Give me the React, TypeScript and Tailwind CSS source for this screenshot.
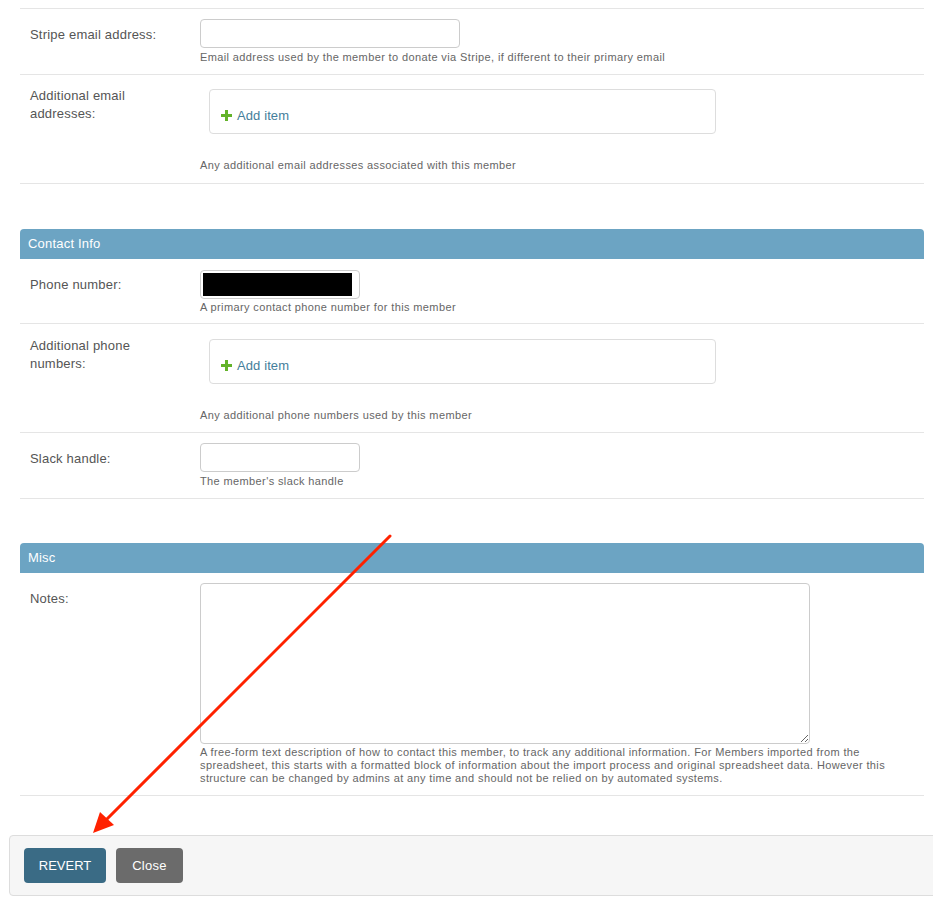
import React from "react";

const font = { fontFamily: '"Liberation Sans", Arial, sans-serif' };

const Help: React.FC<{ children: React.ReactNode; className?: string }> = ({ children, className }) => (
  <div className={`text-[11px] leading-[13px] tracking-[0.38px] text-[#666] ${className ?? ""}`}>{children}</div>
);

const AddItem: React.FC = () => (
  <div className="ml-[9px] w-[507px] h-[45px] border border-[#ddd] rounded-[4px] flex items-start pt-[18px] pl-[11px]">
    <svg width="11" height="11" viewBox="0 0 11 11" className="mr-[5px] mt-[2px]">
      <path d="M4 0h3v4h4v3H7v4H4V7H0V4h4z" fill="#63b32a" />
    </svg>
    <span className="text-[13px] leading-[16px] tracking-[0.1px] text-[#447e9b]">Add item</span>
  </div>
);

const SectionHeader: React.FC<{ title: string }> = ({ title }) => (
  <div className="h-[30px] bg-[#6ca4c3] rounded-t-[4px] flex items-center pl-[8px] text-[13px] tracking-[0.2px] text-white">
    {title}
  </div>
);

const labelCls = "w-[180px] pl-[10px] text-[13px] leading-[18px] tracking-[0.2px] text-[#555]";

export default function App() {
  return (
    <div className="relative w-[933px] h-[914px] overflow-hidden bg-white" style={font}>
      <div className="ml-[20px] w-[904px]">
        <div className="h-[9px] border-b border-[#e5e5e5]" />

        {/* Stripe email */}
        <div className="flex border-b border-[#e5e5e5] pt-[10px] h-[66px]">
          <div className={`${labelCls} pt-[7px]`}>Stripe email address:</div>
          <div>
            <div className="w-[260px] h-[29px] border border-[#ccc] rounded-[4px]" />
            <Help className="mt-[3px]">Email address used by the member to donate via Stripe, if different to their primary email</Help>
          </div>
        </div>

        {/* Additional emails */}
        <div className="flex border-b border-[#e5e5e5] pt-[14px] h-[109px]">
          <div className={`${labelCls} pr-[20px] -mt-[2px]`}>Additional email addresses:</div>
          <div>
            <AddItem />
            <Help className="mt-[25px]">Any additional email addresses associated with this member</Help>
          </div>
        </div>

        <div className="h-[45px]" />
        <SectionHeader title="Contact Info" />

        {/* Phone */}
        <div className="flex border-b border-[#e5e5e5] pt-[11px] h-[65px]">
          <div className={`${labelCls} pt-[6px]`}>Phone number:</div>
          <div>
            <div className="w-[160px] h-[29px] border border-[#ccc] rounded-[4px] p-[2px] pr-[7px]">
              <div className="w-full h-full bg-black" />
            </div>
            <Help className="mt-[2px]">A primary contact phone number for this member</Help>
          </div>
        </div>

        {/* Additional phones */}
        <div className="flex border-b border-[#e5e5e5] pt-[15px] h-[109px]">
          <div className={`${labelCls} pr-[20px] -mt-[2px]`}>Additional phone numbers:</div>
          <div>
            <AddItem />
            <Help className="mt-[25px]">Any additional phone numbers used by this member</Help>
          </div>
        </div>

        {/* Slack */}
        <div className="flex border-b border-[#e5e5e5] pt-[10px] h-[66px]">
          <div className={`${labelCls} pt-[7px]`}>Slack handle:</div>
          <div>
            <div className="w-[160px] h-[29px] border border-[#ccc] rounded-[4px]" />
            <Help className="mt-[3px]">The member's slack handle</Help>
          </div>
        </div>

        <div className="h-[44px]" />
        <SectionHeader title="Misc" />

        {/* Notes */}
        <div className="flex border-b border-[#e5e5e5] pt-[10px] h-[223px]">
          <div className={`${labelCls} pt-[7px]`}>Notes:</div>
          <div>
            <textarea className="block w-[610px] h-[161px] border border-[#ccc] rounded-[4px] resize-y" />
            <Help className="mt-[2px] w-[700px]">
              A free-form text description of how to contact this member, to track any additional information. For Members imported from the spreadsheet, this starts with a formatted block of information about the import process and original spreadsheet data. However this structure can be changed by admins at any time and should not be relied on by automated systems.
            </Help>
          </div>
        </div>
      </div>

      {/* Submit row */}
      <div className="ml-[9px] mt-[39px] w-[930px] h-[61px] bg-[#f6f6f6] border border-[#ddd] rounded-[4px] flex items-center gap-[10px] pl-[14px]">
        <button className="h-[35px] w-[82px] bg-[#3a6b85] rounded-[4px] text-white text-[13px]">REVERT</button>
        <button className="h-[35px] w-[67px] bg-[#6b6b6b] rounded-[4px] text-white text-[13px] tracking-[0.3px]">Close</button>
      </div>

      {/* Annotation arrow */}
      <svg className="absolute left-0 top-0 pointer-events-none" width="933" height="914">
        <line x1="390" y1="536" x2="105" y2="821" stroke="#ff2200" strokeWidth="3" strokeLinecap="round" />
        <polygon points="93,833 100,812 114,825" fill="#ff2200" />
      </svg>
    </div>
  );
}
